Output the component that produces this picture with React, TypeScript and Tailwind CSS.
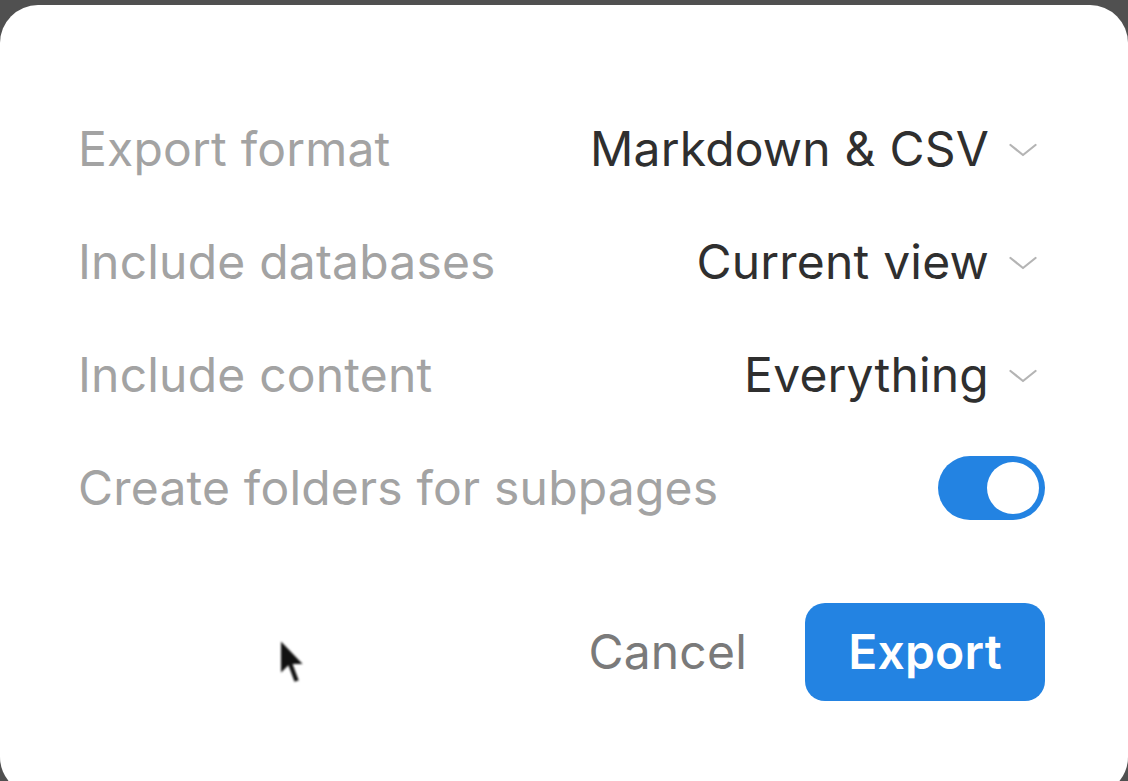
import React from "react";

function Chevron() {
  return (
    <svg width="28" height="16" viewBox="0 0 28 16" className="ml-[20px] mr-[8px] mt-[2px]" fill="none">
      <polyline points="1.5,3 14,13 26.5,3" stroke="#b4b4b4" strokeWidth="2.2" strokeLinecap="round" strokeLinejoin="round" />
    </svg>
  );
}

function Row({ label, children }: { label: string; children: React.ReactNode }) {
  return (
    <div className="h-[113px] flex items-center justify-between">
      <span className="text-[#a3a3a3]">{label}</span>
      <div className="flex items-center">{children}</div>
    </div>
  );
}

export default function App() {
  return (
    <div className="w-[1128px] h-[781px] bg-[#505050] overflow-hidden pt-[5px]" style={{ fontFamily: "Inter, 'Noto Sans', sans-serif" }}>
      <div className="relative h-[790px] bg-white rounded-[38px] pl-[78px] pr-[83px] pt-[87px] text-[48px] tracking-[0.2px]">
        <Row label="Export format">
          <span className="text-[#2f2f2f]">Markdown &amp; CSV</span>
          <Chevron />
        </Row>
        <Row label="Include databases">
          <span className="text-[#2f2f2f]">Current view</span>
          <Chevron />
        </Row>
        <Row label="Include content">
          <span className="text-[#2f2f2f]">Everything</span>
          <Chevron />
        </Row>
        <Row label="Create folders for subpages">
          <div className="w-[107px] h-[64px] rounded-full bg-[#2383e2] flex items-center justify-end pr-[6px]">
            <div className="w-[52px] h-[52px] rounded-full bg-white" />
          </div>
        </Row>
        <div className="mt-[59px] flex items-center justify-end gap-[58px]">
          <span className="text-[#7a7a7a]">Cancel</span>
          <button className="w-[240px] h-[98px] rounded-[20px] bg-[#2383e2] text-white font-semibold">Export</button>
        </div>
        <svg className="absolute left-[276px] top-[630px] blur-[1.2px]" width="34" height="56" viewBox="0 0 34 56">
          <path d="M4 4 L4 40 L12 32 L18 48 L24 46 L18 30 L29 30 Z" fill="#111" stroke="#fff" strokeWidth="2" />
        </svg>
      </div>
    </div>
  );
}
